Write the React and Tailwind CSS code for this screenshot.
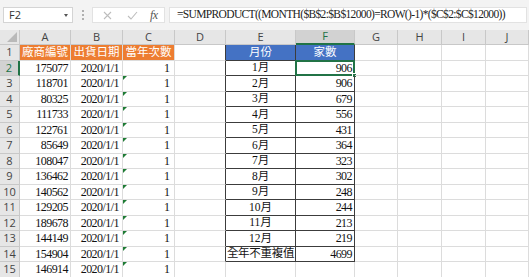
import React from 'react';

const COLS = ['A', 'B', 'C', 'D', 'E', 'F', 'G', 'H', 'I', 'J'];

const vendors = [175077, 118701, 80325, 111733, 122761, 85649, 108047, 136462, 140562, 129205, 189678, 144149, 154904, 146914];
const counts = [906, 906, 679, 556, 431, 364, 323, 302, 248, 244, 213, 219];

const serif = "font-['Liberation_Serif','Noto_Sans_CJK_TC',serif]";
const sans = "font-['Open_Sans','Liberation_Sans',sans-serif]";

const Cell = ({ className = '', children }) => (
  <div className={`relative flex items-center h-[15.5px] border-r border-b border-[#dcdcdc] ${className}`}>
    {children}
  </div>
);

// green "number stored as text" marker
const Flag = () => (
  <span className="absolute left-0 top-0 w-0 h-0 border-t-[4px] border-r-[4px] border-t-[#1e7b34] border-r-transparent" />
);

const App = () => {
  const rows = [];

  // row 1: headers
  rows.push(
    <React.Fragment key="r1">
      <div className={`h-[15.5px] flex items-center justify-center bg-[#e6e6e6] border-r border-b border-[#c8c8c8] text-[11px] text-[#444] ${sans}`}>1</div>
      <Cell className="justify-center bg-[#ed7d31] text-white text-[11.5px]">廠商編號</Cell>
      <Cell className="justify-center bg-[#ed7d31] text-white text-[11.5px]">出貨日期</Cell>
      <Cell className="justify-center bg-[#ed7d31] text-white text-[11.5px]">當年次數</Cell>
      <Cell className="border-r-[#3c3c3c]" />
      <Cell className="justify-center bg-[#4472c4] text-white text-[11.5px] border-r-[#3c3c3c] border-b-[#3c3c3c]">月份</Cell>
      <Cell className="justify-center bg-[#4472c4] text-white text-[11.5px] border-r-[#3c3c3c] border-b-[#3c3c3c]">家數</Cell>
      <Cell /><Cell /><Cell /><Cell />
    </React.Fragment>
  );

  vendors.forEach((v, i) => {
    const r = i + 2;
    const inTable = r <= 14;
    let eText = null;
    let fText = null;
    if (r <= 13) {
      eText = `${r - 1}月`;
      fText = counts[r - 2];
    } else if (r === 14) {
      eText = '全年不重複值';
      fText = 4699;
    }
    const dark = inTable ? 'border-r-[#3c3c3c] border-b-[#3c3c3c]' : '';
    rows.push(
      <React.Fragment key={r}>
        <div className={`h-[15.5px] flex items-center justify-center border-b text-[11px] ${sans} ${
          r === 2 ? 'bg-[#d2d2d2] text-[#217346] border-r-2 border-r-[#217346] border-b-[#c8c8c8]' : 'bg-[#e6e6e6] text-[#444] border-r border-[#c8c8c8]'
        }`}>{r}</div>
        <Cell className="justify-end pr-[2px] text-[12px] tracking-[-0.55px]">{v}</Cell>
        <Cell className="justify-end pr-[3px] text-[12px] tracking-[-0.55px]">2020/1/1</Cell>
        <Cell className="justify-end pr-[4px] text-[12px]">
          {r >= 3 && <Flag />}
          1
        </Cell>
        <Cell className={inTable ? 'border-r-[#3c3c3c]' : ''} />
        <Cell className={`justify-center text-[11.5px] ${r === 14 ? 'tracking-[-0.3px]' : ''} ${dark}`}>{eText}</Cell>
        <Cell className={`justify-end pr-[2px] text-[12px] tracking-[-0.55px] ${dark}`}>
          {r === 2 && (
            <>
              <span className="absolute -left-px -top-px -right-px -bottom-px border-2 border-[#217346]" />
              <span className="absolute -right-[3px] -bottom-[3px] w-[5px] h-[5px] bg-[#217346] border border-white" />
            </>
          )}
          {fText}
        </Cell>
        <Cell /><Cell /><Cell /><Cell />
      </React.Fragment>
    );
  });

  return (
    <div className={`w-[529px] h-[277px] overflow-hidden bg-white text-[11px] text-[#111] ${serif}`}>
      {/* formula bar */}
      <div className="h-[30px] bg-[#f3f3f3] flex items-start pt-[7px] pl-[3px] pr-[2px]">
        <div className={`w-[70px] h-[16px] bg-white border border-[#d4d4d4] flex items-center justify-between pl-[5px] pr-[4px] text-[11px] text-[#333] ${sans}`}>
          <span>F2</span>
          <span className="w-0 h-0 border-l-[2px] border-r-[2px] border-t-[3px] border-l-transparent border-r-transparent border-t-[#555]" />
        </div>
        <div className="w-[19px] h-[16px] flex flex-col items-center justify-center gap-[2px]">
          <span className="w-[2px] h-[2px] bg-[#b0b0b0]" />
          <span className="w-[2px] h-[2px] bg-[#b0b0b0]" />
          <span className="w-[2px] h-[2px] bg-[#b0b0b0]" />
        </div>
        <div className="w-[73px] h-[16px] bg-white border border-[#e2e2e2] flex items-center pl-[9px]">
          <svg width="9" height="9" viewBox="0 0 9 9" className="ml-[1px]">
            <path d="M1 1 L8 8 M8 1 L1 8" stroke="#bdbdbd" strokeWidth="1.1" fill="none" />
          </svg>
          <svg width="11" height="9" viewBox="0 0 11 9" className="ml-[15px]">
            <path d="M1 5 L4 8 L10 1" stroke="#bdbdbd" strokeWidth="1.1" fill="none" />
          </svg>
          <span className="ml-[12px] italic text-[12px] text-[#555] tracking-[-0.5px]">fx</span>
        </div>
        <div className="ml-[4px] flex-1 h-[16px] bg-white border border-[#e2e2e2] flex items-center pl-[7px] text-[11.5px] tracking-[-0.65px] text-[#222] whitespace-nowrap overflow-hidden">
          =SUMPRODUCT((MONTH($B$2:$B$12000)=ROW()-1)*($C$2:$C$12000))
        </div>
      </div>

      {/* sheet */}
      <div className="grid grid-cols-[20px_51px_52px_52px_51px_70px_59px_43px_44px_44px_43px]">
        <div className="h-[15px] bg-[#e6e6e6] border-r border-b border-[#c8c8c8] relative overflow-hidden">
          <span className="absolute right-[2px] bottom-[2px] w-0 h-0 border-b-[10px] border-l-[10px] border-b-[#b9b9b9] border-l-transparent" />
        </div>
        {COLS.map((c) => (
          <div
            key={c}
            className={`h-[15px] flex items-center justify-center text-[11px] ${sans} ${
              c === 'F'
                ? 'bg-[#d2d2d2] text-[#217346] border-r border-r-[#c8c8c8] border-b-2 border-b-[#217346]'
                : 'bg-[#e6e6e6] text-[#444] border-r border-b border-[#c8c8c8]'
            }`}
          >
            {c}
          </div>
        ))}
        {rows}
      </div>
    </div>
  );
};

export default App;
